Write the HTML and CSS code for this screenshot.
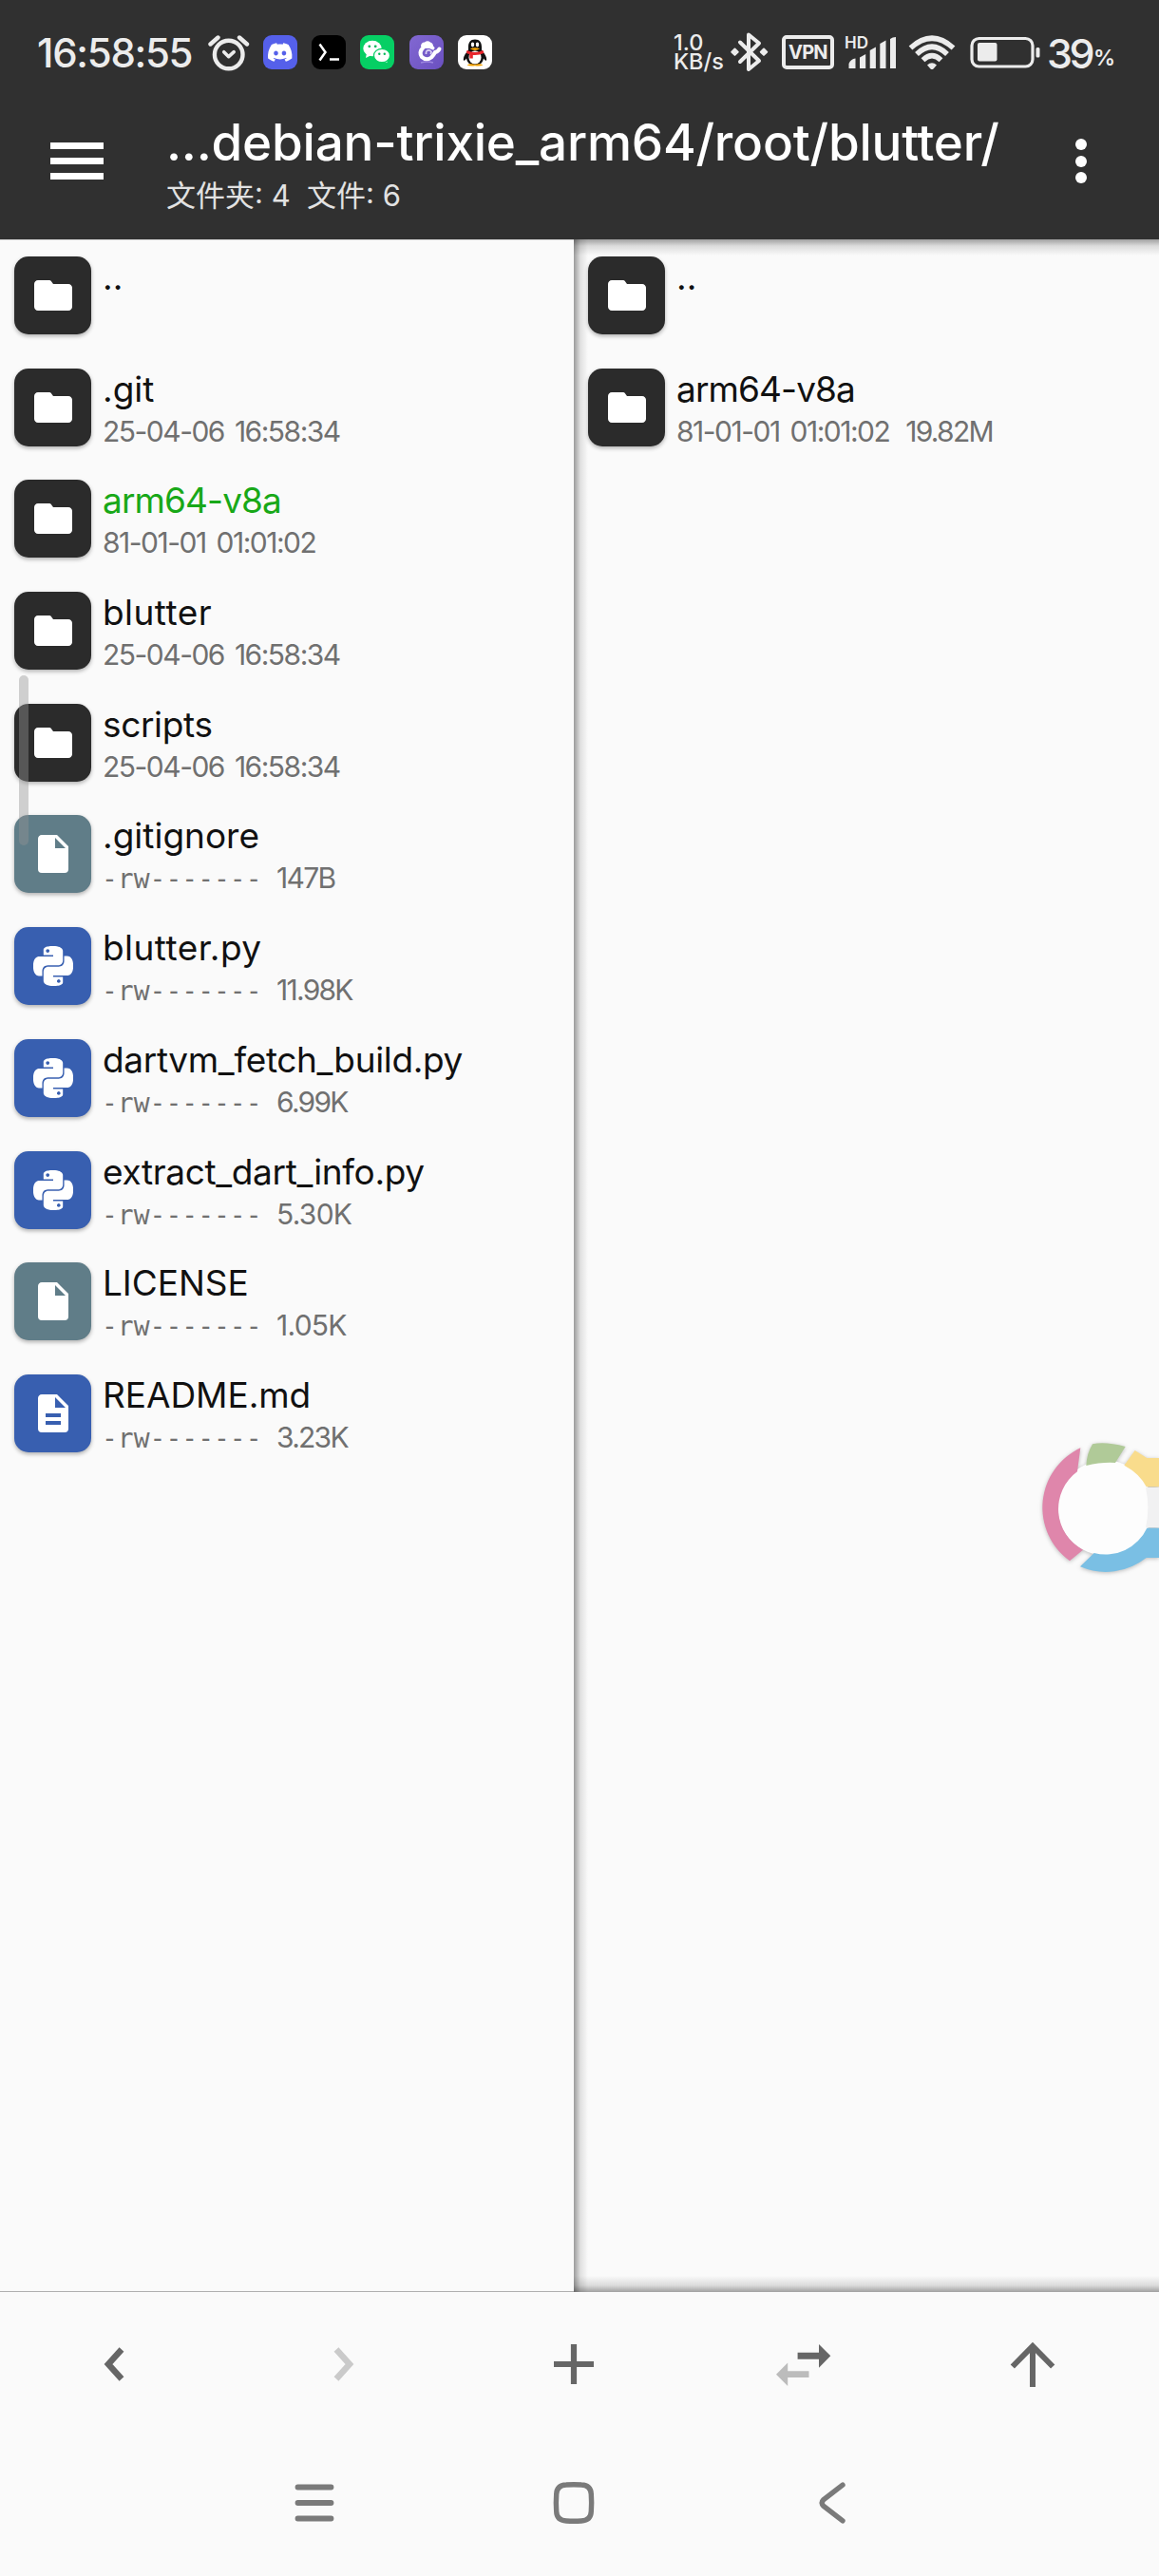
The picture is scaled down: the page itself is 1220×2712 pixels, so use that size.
FILE: index.html
```html
<!DOCTYPE html>
<html lang="zh-CN">
<head>
<meta charset="utf-8">
<title>blutter</title>
<link rel="stylesheet" href="styles.css">
</head>
<body>
<svg class="defs" width="0" height="0" aria-hidden="true">
  <defs>
    <symbol id="i-folder" viewBox="0 0 24 24"><path fill="#fff" d="M10 4H4c-1.1 0-2 .9-2 2v12c0 1.100.9 2 2 2h16c1.100 0 2-.9 2-2V8c0-1.100-.9-2-2-2h-8l-1-1.400Q10.600 4 10 4z"/></symbol>
    <symbol id="i-file" viewBox="0 0 24 24"><path fill="#fff" fill-rule="evenodd" d="M6 2C4.890 2 4 2.890 4 4v16a2 2 0 0 0 2 2h12a2 2 0 0 0 2-2V8l-6-6H6zM13 9V3.500L18.500 9H13z"/></symbol>
    <symbol id="i-doc" viewBox="0 0 24 24"><path fill="#fff" fill-rule="evenodd" d="M6 2C4.890 2 4 2.890 4 4v16a2 2 0 0 0 2 2h12a2 2 0 0 0 2-2V8l-6-6H6zM13 9V3.500L18.500 9H13zM8 12h8v2H8zM8 16h8v2H8z"/></symbol>
    <symbol id="i-python" viewBox="0 0 24 24"><path fill="#fff" d="M14.25.18l.9.2.73.26.59.3.45.32.34.34.25.34.16.33.1.3.04.26.02.2-.01.13V8.5l-.05.63-.13.55-.21.46-.26.38-.3.31-.33.25-.35.19-.35.14-.33.1-.3.07-.26.04-.21.02H8.77l-.69.05-.59.14-.5.22-.41.27-.33.32-.27.35-.2.36-.15.37-.1.35-.07.32-.04.27-.02.21v3.06H3.17l-.21-.03-.28-.07-.32-.12-.35-.18-.36-.26-.36-.36-.35-.46-.32-.59-.28-.73-.21-.88-.14-1.05-.05-1.23.06-1.22.16-1.04.24-.87.32-.71.36-.57.4-.44.42-.33.42-.24.4-.16.36-.1.32-.05.24-.01h.16l.06.01h8.16v-.83H6.18l-.01-2.75-.02-.37.05-.34.11-.31.17-.28.25-.26.31-.23.38-.2.44-.18.51-.15.58-.12.64-.1.71-.06.77-.04.84-.02 1.27.05zm-6.3 1.98l-.23.33-.08.41.08.41.23.34.33.22.41.09.41-.09.33-.22.23-.34.08-.41-.08-.41-.23-.33-.33-.22-.41-.09-.41.09zm13.09 3.95l.28.06.32.12.35.18.36.27.36.35.35.47.32.59.28.73.21.88.14 1.04.05 1.23-.06 1.23-.16 1.04-.24.86-.32.71-.36.57-.4.45-.42.33-.42.24-.4.16-.36.09-.32.05-.24.02-.16-.01h-8.22v.82h5.84l.01 2.76.02.36-.05.34-.11.31-.17.29-.25.25-.31.24-.38.2-.44.17-.51.15-.58.13-.64.09-.71.07-.77.04-.84.01-1.27-.04-1.07-.14-.9-.2-.73-.25-.59-.3-.45-.33-.34-.34-.25-.34-.16-.33-.1-.3-.04-.25-.02-.2.01-.13v-5.34l.05-.64.13-.54.21-.46.26-.38.3-.32.33-.24.35-.2.35-.14.33-.1.3-.06.26-.04.21-.02.13-.01h5.84l.69-.05.59-.14.5-.21.41-.28.33-.32.27-.35.2-.36.15-.36.1-.35.07-.32.04-.28.02-.21V6.07h2.09l.14.01zm-6.47 14.25l-.23.33-.08.41.08.41.23.33.33.23.41.08.41-.08.33-.23.23-.33.08-.41-.08-.41-.23-.33-.33-.23-.41-.08-.41.08z"/></symbol>
    <linearGradient id="violet" x1="0" y1="0" x2="1" y2="1"><stop offset="0" stop-color="#8268d2"/><stop offset="1" stop-color="#6a50c0"/></linearGradient>
  </defs>
</svg>

<header class="header">
  <div class="status">
    <div class="status-left">
      <span class="clock">16:58:55</span>
      <svg class="alarm" width="44" height="40" viewBox="219 34 44 40" fill="none" stroke="#ececec" stroke-width="4.400" stroke-linecap="round" stroke-linejoin="round"><circle cx="240.700" cy="56.500" r="14.800"/><path d="M221.500 45.500l8-7M260 45.500l-8-7"/><path stroke-width="3.600" d="M235.700 53.700l5 5 5.500-5"/></svg>
      <div class="apps">
        <svg width="36" height="36" viewBox="0 0 36 36"><rect width="36" height="36" rx="9" fill="#5560ea"/><g transform="translate(5 5.300) scale(1.060)"><path fill="#fff" d="M20.317 4.370a19.791 19.791 0 00-4.885-1.515.074.074 0 00-.079.037c-.211.375-.445.865-.608 1.250-1.845-.276-3.680-.276-5.487 0-.164-.393-.406-.874-.618-1.250a.077.077 0 00-.079-.037 19.736 19.736 0 00-4.885 1.515.070.070 0 00-.032.028C.533 9.046-.319 13.580.099 18.058a.082.082 0 00.031.056c2.053 1.508 4.041 2.423 5.993 3.029a.078.078 0 00.084-.028c.462-.630.873-1.295 1.226-1.994a.076.076 0 00-.042-.106c-.653-.248-1.274-.550-1.872-.892a.077.077 0 01-.008-.128c.126-.094.252-.192.372-.291a.074.074 0 01.078-.011c3.928 1.793 8.180 1.793 12.061 0a.074.074 0 01.079.010c.120.099.246.198.373.292a.077.077 0 01-.007.128 12.299 12.299 0 01-1.873.891.077.077 0 00-.041.107c.360.698.772 1.363 1.225 1.993a.076.076 0 00.084.029c1.961-.607 3.950-1.522 6.002-3.029a.077.077 0 00.031-.055c.500-5.177-.838-9.674-3.549-13.660a.061.061 0 00-.031-.029zM8.020 15.331c-1.183 0-2.157-1.086-2.157-2.419 0-1.333.956-2.419 2.157-2.419 1.211 0 2.176 1.095 2.157 2.419 0 1.333-.956 2.419-2.157 2.419zm7.975 0c-1.183 0-2.157-1.086-2.157-2.419 0-1.333.955-2.419 2.157-2.419 1.211 0 2.176 1.095 2.157 2.419 0 1.333-.946 2.419-2.157 2.419z"/></g></svg>
        <svg width="36" height="36" viewBox="0 0 36 36"><rect width="36" height="36" rx="9" fill="#000"/><path d="M8.500 9.500l6 8.500-6 8.500M19 25.500h10" fill="none" stroke="#fff" stroke-width="2.500"/></svg>
        <svg width="36" height="36" viewBox="0 0 36 36"><rect width="36" height="36" rx="9" fill="#06cf64"/><path fill="#fff" d="M6 24l1-5 5 2zM28.500 29l-.5-4-4 2z"/><ellipse cx="13" cy="14" rx="9.700" ry="8.200" fill="#fff"/><ellipse cx="23" cy="21.500" rx="8.500" ry="7.200" fill="#fff" stroke="#06cf64" stroke-width="1.200"/><g fill="#06b85a"><circle cx="9.800" cy="11.800" r="1.400"/><circle cx="16.200" cy="11.800" r="1.400"/><circle cx="20.300" cy="19.700" r="1.200"/><circle cx="25.800" cy="19.700" r="1.200"/></g></svg>
        <svg width="36" height="36" viewBox="0 0 36 36"><rect width="36" height="36" rx="9" fill="url(#violet)"/><path d="M24.500 13.500q-5.500-4-10-.5-5 5-1.500 10 5 4.500 10 .5 2.500-2.500 4-5.500 3-.5 4.500-3.500" fill="none" stroke="#fff" stroke-width="4" stroke-linecap="round" stroke-linejoin="round"/><path fill="#fff" d="M12 12q0-4.500 4-4.500 3-2.500 6 0 3.500 1 3 5.500l-6 1z"/><path d="M17.500 20q-.5-4.500 3.500-4 3.500 1.500 1 4" fill="none" stroke="#d9cff5" stroke-width="1.800"/><path d="M12 29q7-2 13 0" fill="none" stroke="#9c86df" stroke-width="1.500"/></svg>
        <svg width="36" height="36" viewBox="0 0 36 36"><rect width="36" height="36" rx="9" fill="#fff"/><path fill="#111" d="M18 4.500c-5 0-7 3.500-7 8v3c-3 4-6 8-5 11 1 1 2-1 3-2 1 5 4 7 9 7s8-2 9-7c1 1 2 3 3 2 1-3-2-7-5-11v-3c0-4.500-2-8-7-8z"/><ellipse cx="18" cy="23.500" rx="6.500" ry="7" fill="#fff"/><path fill="#f5a300" d="M9.500 31.500q4-2 8.500-.5 4.500-1.500 8.500.5-3 1.500-8.500.8-5.500.7-8.500-.8z"/><path fill="#e8252c" d="M9.500 16q8.500 4 17 0l.8 3q-5 2.500-11.500 2v3.500h-3.500v-4.300l-3.300-1.200z"/><ellipse cx="15.500" cy="10" rx="1.700" ry="2.400" fill="#fff"/><ellipse cx="20.500" cy="10" rx="1.700" ry="2.400" fill="#fff"/><path fill="#f5a300" d="M12.800 14.200q5.200-2 10.400 0-5.200 3.400-10.400 0z"/></svg>
      </div>
    </div>
    <div class="status-right">
      <div class="speed"><span>1.0</span><span>KB/s</span></div>
      <svg class="bt" width="40" height="42" viewBox="768 34 40 42" fill="none" stroke="#ececec" stroke-width="4" stroke-linejoin="round" stroke-linecap="round"><path d="M778 44.500l20 19.500-11 9V36.500l11 9-20 19.500"/><path fill="#ececec" stroke-width="2" d="M772.500 51.500l3.200 3.200-3.200 3.200-3.200-3.200zM803 51.500l3.200 3.200-3.200 3.200-3.200-3.200z"/></svg>
      <span class="vpn">VPN</span>
      <div class="signal">
        <span class="hd">HD</span>
        <svg width="50" height="34" viewBox="892 38 50 34" fill="#ececec"><path d="M892.500 72v-5q2-5 7-5.500V72zM904 72V60.500l6.200-3.500v15zM914.700 72V53l6.200-3.500V72zM925.300 72V46l6.200-3.500V72zM936 72V41q2.500-2 6-2v33z"/></svg>
      </div>
      <svg class="wifi" width="50" height="38" viewBox="955 36 50 38" fill="none" stroke="#ececec" stroke-width="5.500"><path d="M957.500 50.500q22.500-20.500 45 0M964 57q16-15.500 32 0M970.500 63.200q9.500-9 19 0"/><path stroke="none" fill="#ececec" d="M975 68.500q5-4.500 10 0l-3.500 4q-1.500 1.200-3 0z"/></svg>
      <svg class="battery" width="74" height="34" viewBox="1020 38 74 34"><rect x="1022" y="40.500" width="64" height="29.500" rx="7.500" fill="none" stroke="#ececec" stroke-width="3.200"/><rect x="1028" y="45" width="20.500" height="19.500" rx="2" fill="#ececec"/><rect x="1089.500" y="50" width="4" height="10.500" rx="1.500" fill="#ececec"/></svg>
      <span class="level">39</span><span class="pct">%</span>
    </div>
  </div>
  <div class="appbar">
    <div class="menu"><i></i><i></i><i></i></div>
    <div class="heading">
      <div class="path">...debian-trixie_arm64/root/blutter/</div>
      <div class="counts">文件夹: 4&nbsp; 文件: 6</div>
    </div>
    <div class="more"><i></i><i></i><i></i></div>
  </div>
</header>

<main class="panes">
  <section class="pane pane-left">
    <div class="row"><div class="tile dark"><svg><use href="#i-folder"/></svg></div><div class="text"><div class="name">..</div></div></div>
    <div class="row"><div class="tile dark"><svg><use href="#i-folder"/></svg></div><div class="text"><div class="name">.git</div><div class="meta"><span class="date">25-04-06 16:58:34</span></div></div></div>
    <div class="row"><div class="tile dark"><svg><use href="#i-folder"/></svg></div><div class="text"><div class="name digits active">arm64-v8a</div><div class="meta"><span class="date">81-01-01 01:01:02</span></div></div></div>
    <div class="row"><div class="tile dark"><svg><use href="#i-folder"/></svg></div><div class="text"><div class="name wide">blutter</div><div class="meta"><span class="date">25-04-06 16:58:34</span></div></div></div>
    <div class="row"><div class="tile dark"><svg><use href="#i-folder"/></svg></div><div class="text"><div class="name tight">scripts</div><div class="meta"><span class="date">25-04-06 16:58:34</span></div></div></div>
    <div class="row"><div class="tile slate"><svg><use href="#i-file"/></svg></div><div class="text"><div class="name">.gitignore</div><div class="meta"><span class="perm">-rw-------</span><span class="size">147B</span></div></div></div>
    <div class="row"><div class="tile blue"><svg class="py"><use href="#i-python"/></svg></div><div class="text"><div class="name wide">blutter.py</div><div class="meta"><span class="perm">-rw-------</span><span class="size">11.98K</span></div></div></div>
    <div class="row"><div class="tile blue"><svg class="py"><use href="#i-python"/></svg></div><div class="text"><div class="name tight">dartvm_fetch_build.py</div><div class="meta"><span class="perm">-rw-------</span><span class="size">6.99K</span></div></div></div>
    <div class="row"><div class="tile blue"><svg class="py"><use href="#i-python"/></svg></div><div class="text"><div class="name tight">extract_dart_info.py</div><div class="meta"><span class="perm">-rw-------</span><span class="size loose">5.30K</span></div></div></div>
    <div class="row"><div class="tile slate"><svg><use href="#i-file"/></svg></div><div class="text"><div class="name caps">LICENSE</div><div class="meta"><span class="perm">-rw-------</span><span class="size loose">1.05K</span></div></div></div>
    <div class="row"><div class="tile blue"><svg><use href="#i-doc"/></svg></div><div class="text"><div class="name caps">README.md</div><div class="meta"><span class="perm">-rw-------</span><span class="size">3.23K</span></div></div></div>
    <div class="scrollbar"></div>
  </section>
  <section class="pane pane-right">
    <div class="row"><div class="tile dark"><svg><use href="#i-folder"/></svg></div><div class="text"><div class="name">..</div></div></div>
    <div class="row"><div class="tile dark"><svg><use href="#i-folder"/></svg></div><div class="text"><div class="name digits">arm64-v8a</div><div class="meta folder-size"><span class="date">81-01-01 01:01:02</span><span class="size">19.82M</span></div></div></div>
    <svg class="bubble" width="160" height="190" viewBox="0 0 480 570">
      <circle cx="310" cy="292" r="150" fill="#fdfdfd"/>
      <path fill="#f1f1f2" d="M438 228h42v127h-42q14-63 0-127z"/>
      <path fill="#df86ab" d="M232 103A208 208 0 0 0 198 460L240 425A146 146 0 0 1 222 178z"/>
      <path fill="#b0ca98" d="M270 91Q310 82 374 99L342 150Q300 147 250 159Q252 120 270 91z"/>
      <path fill="#f9dc8c" d="M404 111L442 135H480V226H440Q420 185 370 158z"/>
      <path fill="#7abfe4" d="M231 478L275 435A144 144 0 0 0 442 356H480V450H440A206 206 0 0 1 231 478z"/>
    </svg>
  </section>
</main>

<footer class="footer">
  <nav class="toolbar">
    <svg width="60" height="60" viewBox="-30 -30 60 60" fill="none" stroke="#666" stroke-width="6.500"><path d="M7-15.500L-7 0 7 15.500"/></svg>
    <svg width="60" height="60" viewBox="-30 -30 60 60" fill="none" stroke="#cacaca" stroke-width="6.500"><path d="M-8-15.500L6 0-8 15.500"/></svg>
    <svg width="60" height="60" viewBox="-30 -30 60 60" fill="none" stroke="#666" stroke-width="6.200"><path d="M-21 0h42M0-21v42"/></svg>
    <svg width="60" height="60" viewBox="-30 -30 60 60"><path fill="#666" d="M-6.400-12.300H16v-8.700L28.300-8.700 16 3.700v-9H-6.400z"/><path fill="#bcbcbc" d="M5.500 7.300h-22.300v-8.800L-29 10.700l12.200 12.200V14H5.500z"/></svg>
    <svg width="60" height="60" viewBox="-30 -30 60 60" fill="none" stroke="#666" stroke-width="6"><path d="M0 24v-42M-21.200 2.500L0-19 21.200 2.500"/></svg>
  </nav>
  <nav class="sysnav">
    <svg width="60" height="60" viewBox="-30 -30 60 60" stroke="#7a7a7a" stroke-width="5.800" stroke-linecap="round"><path d="M-17.500-16.500h35M-17.500 0h35M-17.500 16.500h35"/></svg>
    <svg width="60" height="60" viewBox="-30 -30 60 60" fill="none" stroke="#7a7a7a" stroke-width="5.400"><path d="M-8-19Q0-19.600 8-19 18-18.500 18.300-9 19 0 18.300 9 18 18.500 8 19 0 19.600-8 19-18 18.500-18.300 9-19 0-18.300-9-18-18.500-8-19z"/></svg>
    <svg width="60" height="60" viewBox="-30 -30 60 60" fill="none" stroke="#7a7a7a" stroke-width="5.400" stroke-linecap="round"><path d="M10-18.800L-10-3.500Q-13.500 0-10 3.500L10 18.800"/></svg>
  </nav>
</footer>
</body>
</html>
```
FILE: styles.css
```css
* { box-sizing: border-box; }

body {
  margin: 0;
  width: 1220px;
  height: 2712px;
  display: flex;
  flex-direction: column;
  overflow: hidden;
  background: #fafafa;
  font-family: Inter, "Noto Sans CJK SC", sans-serif;
}

svg { display: block; flex: none; }
.defs { position: absolute; }

/* Header */
.header {
  height: 252px;
  flex: none;
  background: #303030;
  color: #fff;
}
.status {
  height: 110px;
  padding: 0 47px 0 39px;
  display: flex;
  justify-content: space-between;
  align-items: center;
  color: #ececec;
}
.status-left, .status-right {
  display: flex;
  align-items: center;
}
.clock {
  width: 180px;
  font-size: 42px;
  font-weight: 500;
  line-height: 50px;
  letter-spacing: -1.300px;
  margin-top: 2px;
}
.alarm { margin-right: 13.500px; }
.apps { display: flex; gap: 15.400px; }

.speed {
  display: flex;
  flex-direction: column;
  width: 60px;
  font-size: 23.500px;
  font-weight: 500;
  line-height: 20px;
  white-space: nowrap;
}
.vpn {
  width: 55px;
  height: 36px;
  margin-left: 14px;
  border: 4.500px solid #ececec;
  border-radius: 5px;
  font-size: 20px;
  font-weight: 700;
  line-height: 28px;
  text-align: center;
  letter-spacing: -0.800px;
}
.signal {
  position: relative;
  margin-left: 15px;
}
.hd {
  position: absolute;
  left: -4px;
  top: -3px;
  font-size: 17px;
  font-weight: 600;
  line-height: 20px;
}
.wifi { margin-left: 13px; }
.battery { margin-left: 15px; }
.level {
  margin: 2px 0 0 7px;
  font-size: 43px;
  font-weight: 500;
  line-height: 50px;
  letter-spacing: -3.500px;
}
.pct {
  width: 22px;
  margin: 11px 0 0 2px;
  font-size: 23px;
  font-weight: 600;
  line-height: 30px;
}

.appbar { display: flex; }
.menu {
  width: 56px;
  margin: 40px 66px 0 53px;
  display: flex;
  flex-direction: column;
  gap: 9.500px;
}
.menu i { height: 6.500px; background: #fff; }
.heading { width: 900px; padding-top: 8px; }
.path {
  font-size: 53px;
  font-weight: 500;
  line-height: 64px;
  letter-spacing: -0.220px;
  white-space: nowrap;
}
.counts {
  margin-top: 4px;
  font-size: 31px;
  line-height: 40px;
  color: #e2e2e2;
  white-space: nowrap;
}
.more {
  margin: 36px 0 0 57px;
  display: flex;
  flex-direction: column;
  gap: 5.700px;
}
.more i {
  width: 12px;
  height: 12px;
  border-radius: 50%;
  background: #fff;
}

/* File panes */
.panes {
  flex: none;
  height: 2161px;
  display: flex;
}
.pane {
  position: relative;
  padding: 18px 0 0 15px;
}
.pane-left {
  width: 604px;
  border-bottom: 1px solid #b0b0b0;
  box-shadow: inset 0 1px #d8d8d8;
}
.pane-right {
  flex: 1;
  background:
    linear-gradient(to right, rgba(0,0,0,.38), rgba(0,0,0,.1) 7px, transparent 15px),
    linear-gradient(to bottom, rgba(0,0,0,.36), rgba(0,0,0,.12) 7px, transparent 17px),
    linear-gradient(to top, rgba(0,0,0,.36), rgba(0,0,0,.12) 7px, transparent 17px),
    #fafafa;
}
.row {
  height: 117.700px;
  display: flex;
  gap: 12px;
}
.tile {
  width: 81px;
  height: 82px;
  flex: none;
  border-radius: 15px;
  display: flex;
  align-items: center;
  justify-content: center;
  box-shadow: 0 2px 4px rgba(0,0,0,.3);
}
.tile svg { width: 48px; height: 48px; }
.tile .py { width: 42px; height: 42px; }
.dark { background: #2b2b2b; }
.slate { background: #607d88; }
.blue { background: #385fb0; }

.name {
  font-size: 37px;
  line-height: 44px;
  color: #111;
  white-space: nowrap;
}
.name.tight { letter-spacing: -0.350px; }
.name.digits { letter-spacing: -0.900px; }
.name.wide { letter-spacing: 0.450px; }
.name.caps { letter-spacing: -0.050px; }
.name.active { color: #18a818; }
.meta {
  margin-top: 3px;
  display: flex;
  align-items: baseline;
  gap: 15.500px;
  font-size: 30px;
  line-height: 38px;
  color: #707070;
  white-space: nowrap;
}
.meta.folder-size { gap: 17px; }
.date { letter-spacing: -1.500px; word-spacing: 4px; }
.perm {
  margin-left: -1px;
  font-family: "DejaVu Sans Mono", monospace;
  font-size: 28px;
}
.size { letter-spacing: -1.750px; }
.size.loose { letter-spacing: -0.750px; }

.scrollbar {
  position: absolute;
  left: 20px;
  top: 459px;
  width: 10px;
  height: 179px;
  border-radius: 5px;
  background: rgba(148,148,148,.42);
}
.bubble {
  position: absolute;
  right: 0;
  top: 1238px;
  filter: drop-shadow(0 1px 2px rgba(0,0,0,.25));
}

/* Bottom bars */
.footer { width: 1208px; }
.toolbar {
  height: 152px;
  display: grid;
  grid-template-columns: repeat(5, 1fr);
  align-items: center;
  justify-items: center;
}
.sysnav {
  height: 139px;
  display: flex;
  align-items: center;
  justify-content: center;
  gap: 213px;
}
```
